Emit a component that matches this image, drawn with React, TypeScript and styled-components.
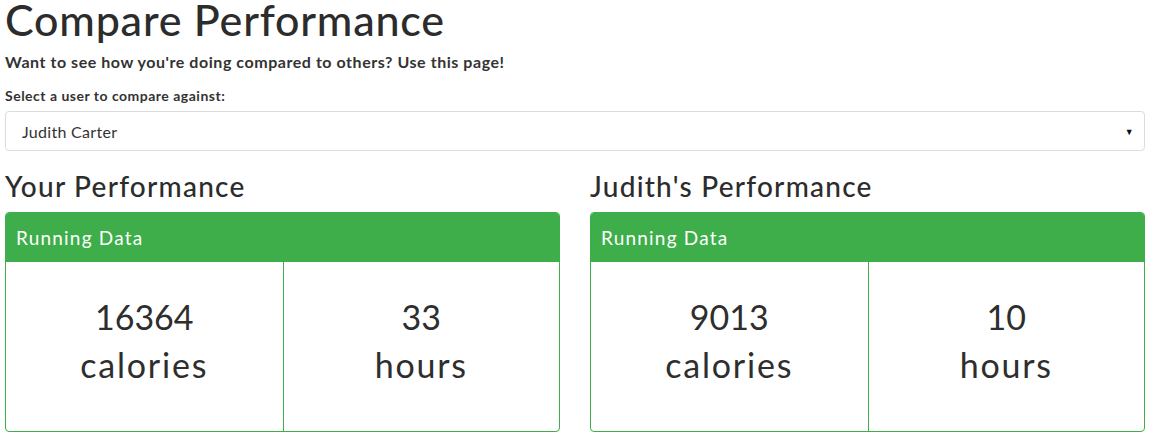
import React from "react";
import styled, { createGlobalStyle } from "styled-components";

const Global = createGlobalStyle`
  html, body { margin: 0; padding: 0; background: #fff; }
  body {
    font-family: "Lato", "Open Sans", sans-serif;
    color: #333;
  }
`;

const Page = styled.div`
  padding: 0 4px 0 5px;
`;

const Title = styled.h1`
  margin: 0;
  font-size: 43px;
  line-height: 40px;
  font-weight: 500;
  letter-spacing: 0.8px;
  color: #2c2c2c;
`;

const Lead = styled.p`
  margin: 11px 0 0;
  font-size: 16px;
  line-height: 22px;
  font-weight: 700;
  letter-spacing: 0.55px;
`;

const Label = styled.label`
  display: block;
  margin-top: 14px;
  font-size: 14px;
  line-height: 18px;
  font-weight: 700;
  letter-spacing: 0.5px;
`;

const SelectBox = styled.div`
  margin-top: 6px;
  height: 38px;
  border: 1px solid #dcdcdc;
  border-radius: 4px;
  display: flex;
  align-items: center;
  justify-content: space-between;
  padding: 0 10px 0 16px;
  font-size: 16px;
  letter-spacing: 0.3px;
`;

const Caret = styled.span`
  font-size: 9px;
  color: #111;
`;

const Columns = styled.div`
  display: grid;
  grid-template-columns: 1fr 1fr;
  column-gap: 30px;
  margin-top: 20px;
`;

const Heading = styled.h3`
  margin: 0 0 11px;
  font-size: 28px;
  line-height: 30px;
  font-weight: 500;
  letter-spacing: 1.25px;
  color: #2c2c2c;
`;

const Panel = styled.div`
  border: 1px solid #3dae49;
  border-radius: 4px;
  overflow: hidden;
`;

const PanelHeader = styled.div`
  background: #3dae49;
  color: #fff;
  height: 49px;
  display: flex;
  align-items: center;
  padding: 0 10px;
  font-size: 19px;
  letter-spacing: 1.2px;
`;

const Cells = styled.div`
  display: grid;
  grid-template-columns: 1fr 1fr;
`;

const Cell = styled.div<{ $divider?: boolean }>`
  height: 169px;
  display: flex;
  flex-direction: column;
  align-items: center;
  justify-content: center;
  border-left: ${(p) => (p.$divider ? "1px solid #3dae49" : "none")};
  font-size: 34px;
  line-height: 48px;
  color: #2e2e2e;
  padding-bottom: 12px;
  box-sizing: border-box;
`;

const Unit = styled.span`
  letter-spacing: 1.8px;
`;

type Stat = { value: string; unit: string };

const PerfPanel = ({ title, stats }: { title: string; stats: Stat[] }) => (
  <div>
    <Heading>{title}</Heading>
    <Panel>
      <PanelHeader>Running Data</PanelHeader>
      <Cells>
        {stats.map((s, i) => (
          <Cell key={s.unit} $divider={i > 0}>
            <span>{s.value}</span>
            <Unit>{s.unit}</Unit>
          </Cell>
        ))}
      </Cells>
    </Panel>
  </div>
);

export default function App() {
  return (
    <Page>
      <Global />
      <Title>Compare Performance</Title>
      <Lead>Want to see how you're doing compared to others? Use this page!</Lead>
      <Label>Select a user to compare against:</Label>
      <SelectBox>
        <span>Judith Carter</span>
        <Caret>▼</Caret>
      </SelectBox>
      <Columns>
        <PerfPanel
          title="Your Performance"
          stats={[
            { value: "16364", unit: "calories" },
            { value: "33", unit: "hours" },
          ]}
        />
        <PerfPanel
          title="Judith's Performance"
          stats={[
            { value: "9013", unit: "calories" },
            { value: "10", unit: "hours" },
          ]}
        />
      </Columns>
    </Page>
  );
}
